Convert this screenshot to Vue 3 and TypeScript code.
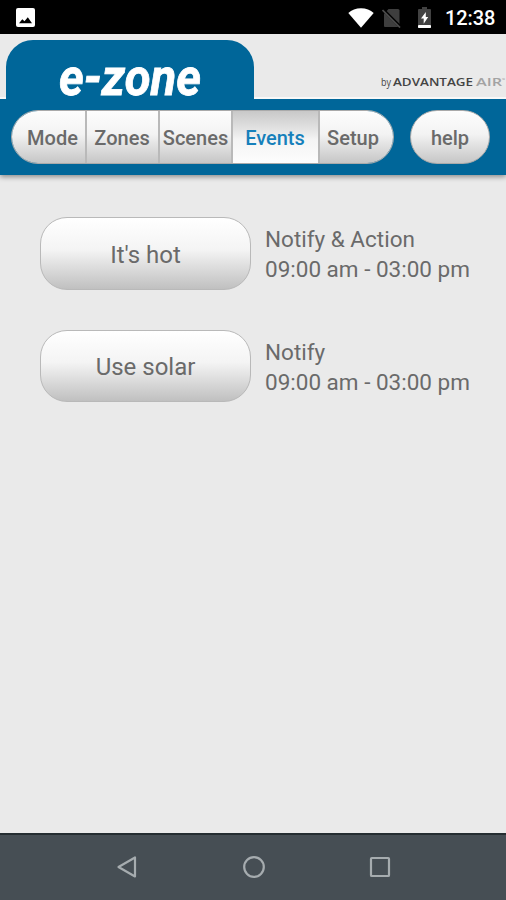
<script setup lang="ts">
import { ref } from 'vue'

interface Tab {
  id: string
  label: string
}

interface EventItem {
  name: string
  kind: string
  time: string
}

const tabs: Tab[] = [
  { id: 'mode', label: 'Mode' },
  { id: 'zones', label: 'Zones' },
  { id: 'scenes', label: 'Scenes' },
  { id: 'events', label: 'Events' },
  { id: 'setup', label: 'Setup' },
]

const active = ref('events')

const events: EventItem[] = [
  { name: "It's hot", kind: 'Notify & Action', time: '09:00 am - 03:00 pm' },
  { name: 'Use solar', kind: 'Notify', time: '09:00 am - 03:00 pm' },
]
</script>

<template>
  <div class="screen">
    <div class="status">
      <svg class="picture" width="19" height="19" viewBox="0 0 19 19">
        <rect width="19" height="19" rx="2" fill="#fff" />
        <path d="M3 15.200 6.300 11.200 8.500 13.200 11.800 9.300 16 15.200Z" fill="#000" />
      </svg>
      <div class="status-right">
        <svg class="wifi" width="26" height="20" viewBox="0 0 26 20">
          <path d="M0.300 5C3.500 2 8 0.300 13 0.300S22.500 2 25.700 5L13 19.800Z" fill="#fff" />
        </svg>
        <svg class="sim" width="20" height="20" viewBox="0 0 20 20">
          <path d="M6.500 1H16q1.500 0 1.500 1.500V18q0 1-1 1H3q-1 0-1-1V6Z" fill="#3e3e3e" />
          <path d="M0.800 1.300 18.800 19.300" stroke="#000" stroke-width="3" />
          <path d="M0.500 2 18 19.500" stroke="#4c4c4c" stroke-width="1.700" />
        </svg>
        <svg class="battery" width="13" height="21" viewBox="0 0 13 21">
          <path d="M4 0H9V2H12Q13 2 13 3V18H0V3Q0 2 1 2H4Z" fill="#424242" />
          <rect y="18" width="13" height="3" rx="0.700" fill="#fff" />
          <path d="M7.800 5 3 11.500H5.700V16.700L10.200 10H7.800Z" fill="#fff" />
        </svg>
        <span class="clock">12:38</span>
      </div>
    </div>

    <header class="brand">
      <div class="brand-tab">
        <svg width="148" height="44" viewBox="0 0 148 44">
          <text class="logo" x="3" y="35" textLength="142" lengthAdjust="spacingAndGlyphs">e-zone</text>
        </svg>
      </div>
      <svg class="maker" width="128" height="16" viewBox="0 0 128 16">
        <text class="by" x="3" y="11" textLength="10" lengthAdjust="spacingAndGlyphs">by</text>
        <text class="advantage" x="15" y="11" textLength="80" lengthAdjust="spacingAndGlyphs">ADVANTAGE</text>
        <text class="air" x="98" y="11" textLength="26" lengthAdjust="spacingAndGlyphs">AIR</text>
        <text class="tm" x="124" y="7" textLength="3" lengthAdjust="spacingAndGlyphs">™</text>
      </svg>
    </header>

    <nav class="bar">
      <div class="tabs">
        <button
          v-for="tab in tabs"
          :key="tab.id"
          class="tab"
          :class="[tab.id, { active: active === tab.id }]"
          @click="active = tab.id"
        >{{ tab.label }}</button>
      </div>
      <button class="help">help</button>
    </nav>

    <main class="events-list">
      <div v-for="item in events" :key="item.name" class="event">
        <button class="event-button">{{ item.name }}</button>
        <div class="detail">
          <div>{{ item.kind }}</div>
          <div>{{ item.time }}</div>
        </div>
      </div>
    </main>

    <footer class="system">
      <svg width="24" height="24" viewBox="0 0 24 24">
        <path d="M20 2.500V21.500L3.500 12Z" />
      </svg>
      <svg width="24" height="24" viewBox="0 0 24 24">
        <circle cx="12" cy="12" r="9.800" />
      </svg>
      <svg width="24" height="24" viewBox="0 0 24 24">
        <rect x="3" y="3" width="18" height="18" rx="0.800" />
      </svg>
    </footer>
  </div>
</template>

<style>
body {
  margin: 0;
}
</style>

<style scoped>
.screen {
  width: 506px;
  height: 900px;
  display: flex;
  flex-direction: column;
  overflow: hidden;
  background: #eaeaea;
  font-family: Roboto, 'Liberation Sans', sans-serif;
}

button {
  box-sizing: border-box;
  margin: 0;
  padding: 0;
  font-family: inherit;
  color: #6a6a6a;
}

.status {
  flex: none;
  height: 34px;
  box-sizing: border-box;
  padding: 0 11px 0 16px;
  display: flex;
  align-items: center;
  justify-content: space-between;
  background: #000;
}

.status-right {
  display: flex;
  align-items: center;
}

.wifi {
  margin-top: 1px;
}

.sim {
  margin: 1px 0 0 8px;
}

.battery {
  margin: 1px 0 0 16px;
}

.clock {
  width: 50px;
  margin: 2px 0 0 14px;
  font-size: 20px;
  line-height: 24px;
  font-weight: 500;
  letter-spacing: -0.1px;
  color: #fff;
}

.brand {
  position: relative;
  z-index: 1;
  flex: none;
  height: 65px;
  box-sizing: border-box;
  padding: 6px 0 0 6px;
  display: flex;
  justify-content: space-between;
  background: linear-gradient(#eaeaea 0 63px, #f8f8f8 63px);
}

.brand-tab {
  width: 248px;
  height: 59px;
  box-sizing: border-box;
  padding-top: 20px;
  display: flex;
  justify-content: center;
  border-radius: 27px 27px 0 0;
  background: #006699;
}

.brand-tab svg {
  flex: none;
  overflow: visible;
}

.logo {
  font: italic 700 51px Roboto, sans-serif;
  fill: #fff;
  stroke: #fff;
  stroke-width: 0.8px;
}

.maker {
  margin-top: 34.500px;
}

.maker text {
  font-family: 'Open Sans', sans-serif;
  font-size: 11px;
  fill: #444;
}

.maker .by {
  font-size: 10px;
}

.maker .advantage {
  font-weight: 600;
}

.maker .air {
  font-weight: 600;
  fill: #a3a3a3;
}

.maker .tm {
  font-size: 5px;
  fill: #999;
}

.bar {
  flex: none;
  height: 76px;
  box-sizing: border-box;
  padding: 11px 16px 0 11px;
  display: flex;
  justify-content: space-between;
  background: #006699;
  box-shadow: 0 2px 5px rgba(0, 0, 0, 0.4);
}

.tabs {
  width: 383px;
  height: 54px;
  box-sizing: border-box;
  display: flex;
  overflow: hidden;
  border: 1px solid #aaa;
  border-radius: 27px;
}

.tab {
  border: 0;
  border-right: 2px solid #b9b9b9;
  padding-top: 1px;
  background: linear-gradient(#fdfdfd, #f3f3f3 45%, #e2e2e2 65%, #c6c6c6);
  font-size: 20px;
  font-weight: 500;
}

.mode {
  width: 75px;
  padding-left: 8px;
}

.zones,
.scenes {
  width: 73px;
}

.zones {
  padding-right: 1px;
}

.events {
  width: 87px;
  padding-right: 1px;
}

.setup {
  width: 73px;
  padding-right: 7px;
  border-right: 0;
}

.tab.active {
  color: #1680bb;
  background: linear-gradient(#c8c8c8, #e3e3e3 35%, #f4f4f4 55%, #fdfdfd);
}

.help {
  width: 80px;
  height: 54px;
  padding-top: 1px;
  border: 1px solid #aaa;
  border-radius: 27px;
  background: linear-gradient(#fdfdfd, #f3f3f3 45%, #e2e2e2 65%, #c6c6c6);
  font-size: 20px;
  font-weight: 500;
}

.events-list {
  flex: 1;
  padding: 42px 0 0 40px;
  display: flex;
  flex-direction: column;
  gap: 40px;
}

.event {
  display: flex;
  align-items: center;
  gap: 14px;
}

.event-button {
  width: 211px;
  height: 72.500px;
  padding-top: 3px;
  border: 1px solid #b9b9b9;
  border-radius: 27px;
  background: linear-gradient(#fff, #f4f4f4 45%, #e1e1e1 65%, #c0c0c0);
  font-size: 24px;
}

.detail {
  padding-top: 1.500px;
  font-size: 22.500px;
  line-height: 30px;
  color: #6a6a6a;
}

.system {
  flex: none;
  height: 67px;
  box-sizing: border-box;
  padding: 0 114px 2px 115px;
  display: flex;
  align-items: center;
  justify-content: space-between;
  border-top: 2px solid #252d31;
  background: #464e54;
}

.system svg {
  fill: none;
  stroke: #a6acaf;
  stroke-width: 2.200;
  stroke-linejoin: round;
}
</style>
